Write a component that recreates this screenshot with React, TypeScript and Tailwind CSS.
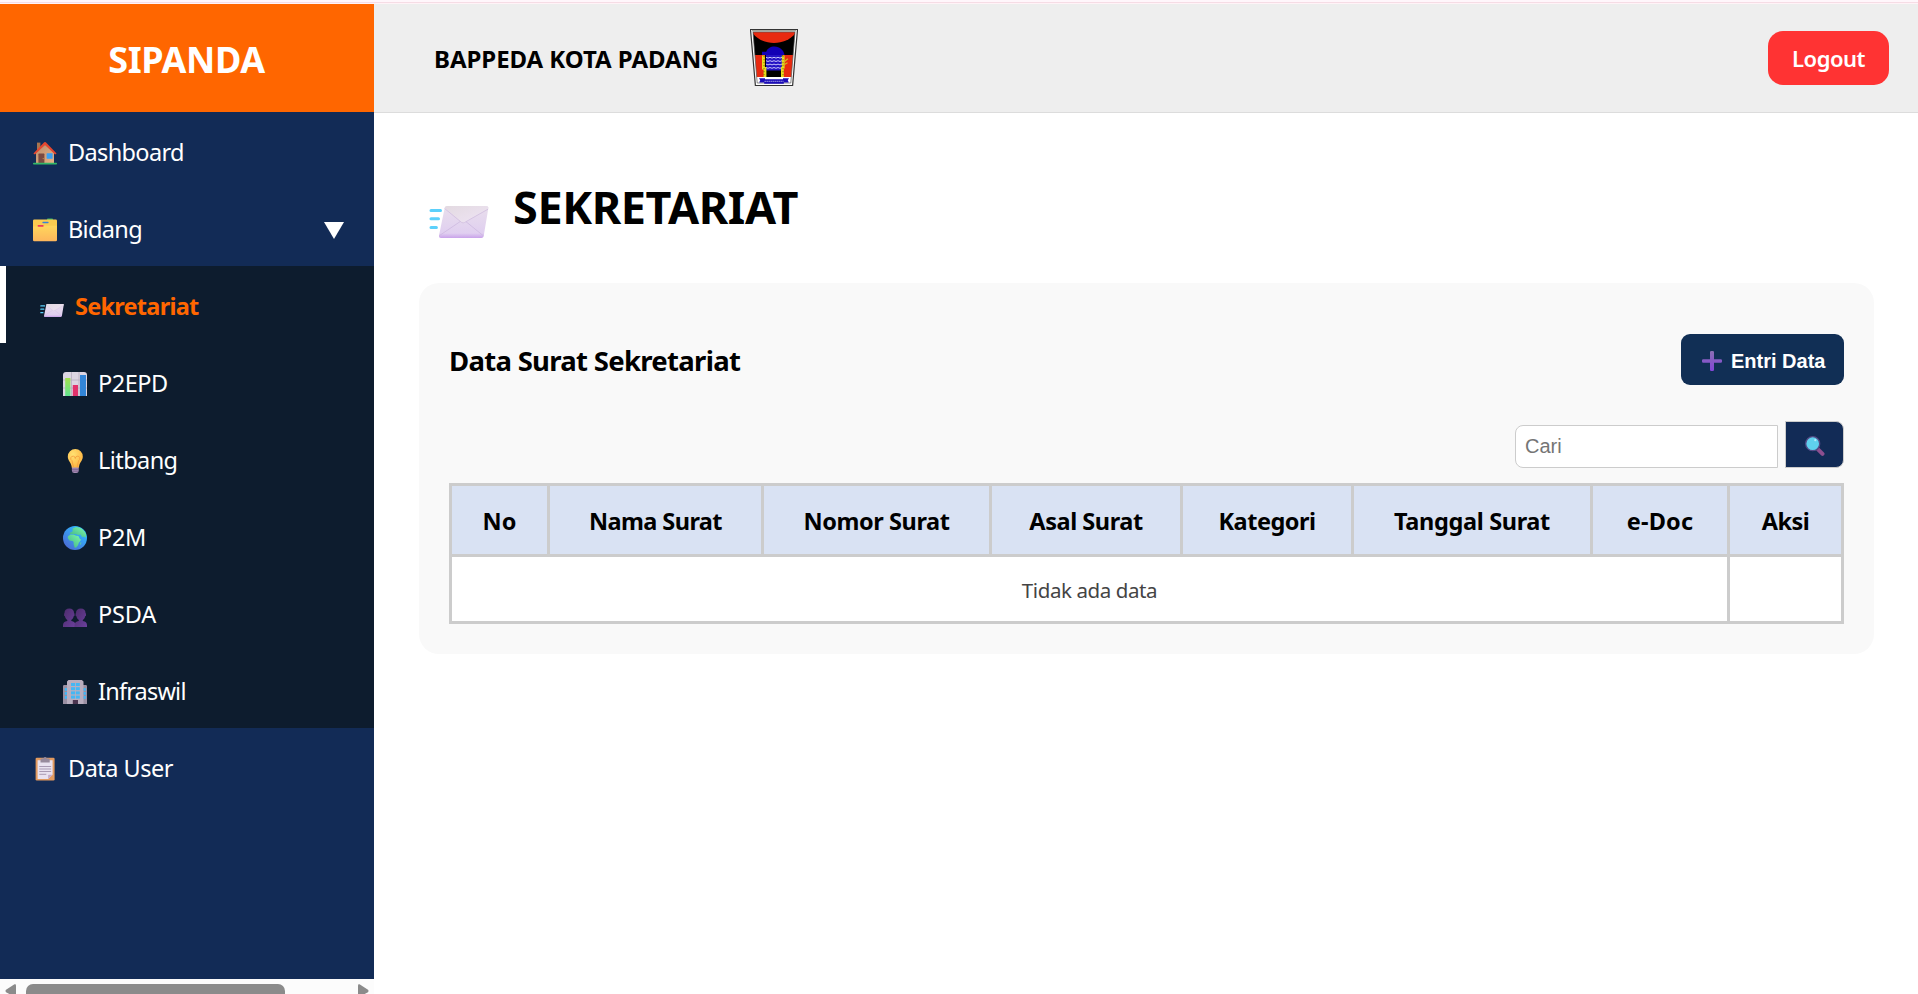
import type { ReactNode } from "react";

const HouseIcon = () => (
  <svg viewBox="0 0 24 24" className="size-6 shrink-0">
    <defs>
      <linearGradient id="wall" x1="0" y1="0" x2="1" y2="1">
        <stop offset="0" stopColor="#b98d6c" />
        <stop offset="1" stopColor="#e8b184" />
      </linearGradient>
    </defs>
    <rect x="4" y="1.6" width="3.4" height="8" fill="#a8744f" />
    <path d="M3 11.5 12 3.5l9 8V22H3z" fill="url(#wall)" />
    <path d="M.4 12.4 11.2 1.3a1.2 1.2 0 0 1 1.6 0L23.6 12.4l-1.5 1.2L12 3.9 1.9 13.6z" fill="#e5472f" />
    <rect x="5.4" y="12.6" width="6" height="9.4" rx=".6" fill="#7a4a42" />
    <rect x="9.6" y="17" width="1.2" height="1.2" rx=".6" fill="#c9a04f" />
    <rect x="13.6" y="12.2" width="6" height="5.6" rx=".5" fill="#3aa0f2" />
    <rect y="21.8" width="24" height="1.8" rx=".8" fill="#32b768" />
  </svg>
);

const FolderIcon = () => (
  <svg viewBox="0 0 24 24" className="size-6 shrink-0">
    <defs>
      <linearGradient id="folder" x1="0" y1="0" x2="0" y2="1">
        <stop offset="0" stopColor="#ffd65c" />
        <stop offset="1" stopColor="#fdb65c" />
      </linearGradient>
    </defs>
    <rect x="14" y=".4" width="6" height="3" rx=".8" fill="#32b768" />
    <path d="M0 2.800a1.200 1.200 0 0 1 1.200-1.200h21.600A1.200 1.200 0 0 1 24 2.800V12H0z" fill="#fbcb50" />
    <rect x="9.400" y="3.700" width="6.200" height="1.500" rx=".6" fill="#3b82d6" />
    <path d="M0 8.600h10.600l1.200-.9H24V22a1.300 1.300 0 0 1-1.300 1.300H1.300A1.300 1.300 0 0 1 0 22z" fill="url(#folder)" />
    <rect x="4.600" y="7" width="6" height="1.800" rx=".7" fill="#f03c5a" />
  </svg>
);

const EnvelopeIcon = ({ className }: { className: string }) => (
  <svg viewBox="0 0 60 32" className={className}>
    <defs>
      <linearGradient id="mail" x1="0" y1="0" x2="0" y2="1">
        <stop offset="0" stopColor="#e9dfec" />
        <stop offset=".85" stopColor="#e0cff0" />
        <stop offset="1" stopColor="#c9a2ea" />
      </linearGradient>
      <linearGradient id="flap" x1="0" y1="0" x2="1" y2="1">
        <stop offset="0" stopColor="#e3dae1" />
        <stop offset="1" stopColor="#efe4f5" />
      </linearGradient>
    </defs>
    <g stroke="#5cd0fb" strokeWidth="3" strokeLinecap="round">
      <path d="M2 4.600h9.500M2 12.800h7.500M2 21.400h5.400" />
    </g>
    <path d="M15.600 2.200A3 3 0 0 1 18.400 0H57.300a2 2 0 0 1 2 2.500L54.700 30a2.400 2.400 0 0 1-2.400 2H12a2 2 0 0 1-2-2.400z" fill="url(#mail)" />
    <path d="M15.600 1.500A3 3 0 0 1 18.400 0H57.300a2 2 0 0 1 2 2.500L35.500 16.500q-1.500.8-2.800 0z" fill="url(#flap)" />
    <path d="M15.600 2.500 32.700 16.500q1.500.8 2.800 0L59 3.200" fill="none" stroke="#d3c1e0" strokeWidth=".9" />
    <path d="M10.500 29.500 31 15.700M54.400 29.800 37 15.700" fill="none" stroke="#cdb9e0" strokeWidth=".8" />
  </svg>
);

const ChartIcon = () => (
  <svg viewBox="0 0 24 24" className="size-6 shrink-0">
    <defs>
      <linearGradient id="green" x1="0" y1="0" x2="0" y2="1">
        <stop offset="0" stopColor="#a4e04e" />
        <stop offset="1" stopColor="#5fe38e" />
      </linearGradient>
    </defs>
    <path d="M0 3a3 3 0 0 1 3-3h18a3 3 0 0 1 3 3v21H0z" fill="#dcd5e2" />
    <path d="M8.500 0v24M16 0v24M0 8h24M0 16h24" stroke="#b7adbf" strokeWidth=".8" />
    <rect x="2.200" y="6" width="5.200" height="18" fill="url(#green)" />
    <rect x="9.800" y="13" width="5.200" height="11" fill="#e2326c" />
    <rect x="17" y="3" width="6" height="21" fill="#3285d8" />
  </svg>
);

const BulbIcon = () => (
  <svg viewBox="0 0 24 24" className="size-6 shrink-0">
    <defs>
      <radialGradient id="bulb" cx=".35" cy=".3" r=".8">
        <stop offset="0" stopColor="#ffe173" />
        <stop offset="1" stopColor="#fdb03c" />
      </radialGradient>
    </defs>
    <path d="M12.300 0a7.500 7.500 0 0 1 7.500 7.600c0 4-2.800 5.400-3.700 9.400l-.4 1.900H8.900L8.500 17C7.600 13 4.800 11.600 4.800 7.600A7.500 7.500 0 0 1 12.300 0z" fill="url(#bulb)" />
    <path d="m10.500 18-1.600-6.500a2.300 2.300 0 1 1 3.400-2 2.300 2.300 0 1 1 3.400 2L14.100 18" fill="none" stroke="#f39a3c" strokeWidth=".8" />
    <path d="M8.900 18.500h6.800v3.200a2.400 2.400 0 0 1-2.400 2.300h-2a2.400 2.400 0 0 1-2.400-2.300z" fill="#a48bb4" />
    <path d="M8.900 20.300h6.800M9.200 22.200h6.200" stroke="#6f5483" strokeWidth=".7" />
  </svg>
);

const GlobeIcon = () => (
  <svg viewBox="0 0 24 24" className="size-6 shrink-0">
    <defs>
      <linearGradient id="sea" x1=".8" y1=".2" x2=".2" y2=".9">
        <stop offset="0" stopColor="#2fb6ff" />
        <stop offset="1" stopColor="#4a6fd6" />
      </linearGradient>
      <linearGradient id="land" x1="1" y1="0" x2="0" y2="1">
        <stop offset="0" stopColor="#7dfba9" />
        <stop offset="1" stopColor="#3fae86" />
      </linearGradient>
    </defs>
    <circle cx="12" cy="12" r="12" fill="url(#sea)" />
    <path d="M9.500 2.600 13 1l4 .8c3 1.400 5.200 4 6.200 7l-.6 3-2-1.300-1.200.8-2-2.700-2.400.3-2.200-1-2.500.6-2-.8-1.400.7.300-2 2-.7.600-1.600z" fill="url(#land)" />
    <path d="M5 10.200 7.600 8.400l3.400.3 2.200 1 2.200.3 1.500 3 1.300.8-2.400 3-.8 2.400-1.900 2.300-1.400.2-1-3.100-.1-2.500-1-1.200-3.200-.4L4.700 12z" fill="url(#land)" />
    <path d="m17.500 16.300.9 0-.4 2.200-.9.300z" fill="#5fd19a" />
  </svg>
);

const PeopleIcon = () => (
  <svg viewBox="0 0 24 24" className="size-6 shrink-0">
    <defs>
      <linearGradient id="person" x1="0" y1="0" x2="1" y2="1">
        <stop offset="0" stopColor="#4c2b6b" />
        <stop offset="1" stopColor="#6a409c" />
      </linearGradient>
    </defs>
    {[0, 11.5].map((x) => (
      <g key={x} transform={`translate(${x} 5.500)`} fill="url(#person)">
        <path d="M1.500 4.500C1.500 1.500 3.300 0 6.300 0S11 1.500 11 4.500l.5.800v1.900l-.8.600C10.200 10.500 8.600 12 6.300 12s-3.900-1.500-4.400-4.200l-.8-.600V5.300zM4.300 10h4v4h-4zM0 18.500v-1.800c0-2.500 1.700-3.700 4.200-4.200h4.200c2.500.5 4.100 1.700 4.100 4.200v1.800z" />
      </g>
    ))}
  </svg>
);

const BuildingIcon = () => (
  <svg viewBox="0 0 24 24" className="size-6 shrink-0">
    <path d="M0 6.200A1.200 1.200 0 0 1 1.200 5H5v19H0z" fill="#9a90a3" />
    <path d="M24 6.200A1.200 1.200 0 0 0 22.800 5H19v19h5z" fill="#9a90a3" />
    <path d="M4 1.500 5.500 0h13.300L20.500 1.500V24H4z" fill="#b9aebf" />
    <g fill="#44b7f5">
      {[3, 7.2, 11.4, 15.6].map((y) => (
        <g key={y}>
          <rect x="8" y={y} width="4" height="3" />
          <rect x="12.800" y={y} width="4" height="3" />
        </g>
      ))}
      {[8, 12, 16].map((y) => (
        <g key={y}>
          <rect x="1.800" y={y} width="2.200" height="2.800" />
          <rect x="20.600" y={y} width="2.200" height="2.800" />
        </g>
      ))}
    </g>
    <rect x="9.800" y="20" width="5.200" height="4" fill="#4b3550" />
  </svg>
);

const ClipboardIcon = () => (
  <svg viewBox="0 0 24 24" className="size-6 shrink-0">
    <rect x="2.600" y=".8" width="19" height="22.600" rx="1.200" fill="#e29a5f" />
    <path d="M4.600 3.200h15v14.500l-4.500 4.300H4.600z" fill="#e9e2f0" />
    <path d="m19.600 17.700-4.500 4.300v-3.600q0-.7.700-.7z" fill="#c4abc9" />
    <path d="M7.500 5.400V2.600a1 1 0 0 1 1-1h2a1.600 1.600 0 0 1 3.200 0h2a1 1 0 0 1 1 1v2.800z" fill="#978a9c" />
    <path d="M6.300 9.500h11.800M6.300 12h11.800M6.300 14.500h11.800M6.300 17.300h7" stroke="#a99ab3" strokeWidth="1" />
  </svg>
);

const CityCrest = () => (
  <svg viewBox="0 0 48 57" className="h-[57px] w-12 shrink-0">
    <defs>
      <clipPath id="field">
        <path d="M3 3h42l-4.200 51H7.200z" />
      </clipPath>
    </defs>
    <path d="M.500.500h47L42.600 56.500H5.400z" fill="#fff" stroke="#333" strokeWidth="1.200" />
    <path d="M2 1.800h44" stroke="#a3a399" strokeWidth="1.600" />
    <g clipPath="url(#field)">
      <rect width="48" height="26" fill="#000" />
      <path d="M2 3h44C42 10 33 14 24 14S6 10 2 3z" fill="#e82a10" />
      <rect y="26" width="48" height="22" fill="#e82a10" />
      <rect y="48" width="48" height="8" fill="#fff" />
    </g>
    <path d="M3 3h42l-4.200 51H7.200z" fill="none" stroke="#555" strokeWidth=".7" />
    <path d="M12 26v-3.200h4.200c1-3.400 4.300-5.400 8.300-5.400 5.300 0 9.300 3.500 10 8.600z" fill="#1200b5" />
    <rect x="15" y="26" width="18" height="22" fill="#000" />
    <rect x="16" y="26" width="16" height="15.500" fill="#2413c4" />
    <path d="M16 28.300l2 .8 2-.8 2 .8 2-.8 2 .8 2-.8 2 .8 2-.8M16 31.700l2 .8 2-.8 2 .8 2-.8 2 .8 2-.8 2 .8 2-.8M16 35.100l2 .8 2-.8 2 .8 2-.8 2 .8 2-.8 2 .8 2-.8M16 38.500l2 .8 2-.8 2 .8 2-.8 2 .8 2-.8 2 .8 2-.8" fill="none" stroke="#d9d8ff" strokeWidth=".9" />
    <path d="M13.400 26.500v14M15 38v10M33.200 26.500v13M32.400 38v10" stroke="#e8dc1c" strokeWidth="2.800" />
    <path d="M14 27v20M33 27v20" stroke="#6b6310" strokeWidth=".8" strokeDasharray="1.200 1.800" />
    <path d="M34 33l3.800-3.200M33.500 36l4-2.200" stroke="#d5b81a" strokeWidth="1.200" />
    <path d="M9 49.300h6v1h18v-1h6l-1.200 2 1 2.200h-5v1.200H14.200v-1.200h-5l1-2.200z" fill="#1a0bb8" />
    <path d="M14.500 52.300h19" stroke="#a9a6e6" strokeWidth="1" strokeDasharray="1.400 .6" />
  </svg>
);

const PlusIcon = () => (
  <svg viewBox="0 0 20 20" className="size-5 shrink-0">
    <defs>
      <linearGradient id="plus" x1="0" y1="0" x2="0" y2="1">
        <stop offset="0" stopColor="#8b6fb4" />
        <stop offset="1" stopColor="#8245d8" />
      </linearGradient>
    </defs>
    <path d="M8 1.200A1.200 1.200 0 0 1 9.200 0h1.600A1.200 1.200 0 0 1 12 1.200V8.200h6.800A1.200 1.200 0 0 1 20 9.400v1.200a1.200 1.200 0 0 1-1.200 1.200H12v7A1.200 1.200 0 0 1 10.800 20H9.200A1.200 1.200 0 0 1 8 18.800v-7H1.200A1.200 1.200 0 0 1 0 10.600V9.400a1.200 1.200 0 0 1 1.200-1.200H8z" fill="url(#plus)" />
  </svg>
);

const SearchIcon = () => (
  <svg viewBox="0 0 20 20" className="size-5 shrink-0">
    <path d="M13 13.300 17.500 17.800" stroke="#8d4f8f" strokeWidth="4" strokeLinecap="round" />
    <path d="M11.500 12 13 13.500" stroke="#5c4480" strokeWidth="2.600" />
    <circle cx="7.700" cy="7.700" r="7" fill="#5fd0ee" stroke="#544a86" strokeWidth="1.300" />
    <circle cx="10.300" cy="4.200" r="1.100" fill="#b5ecfb" />
  </svg>
);

type NavItem = { label: string; tracking: string; icon: ReactNode };

const bidangItems: NavItem[] = [
  { label: "P2EPD", tracking: "tracking-[-0.5px]", icon: <ChartIcon /> },
  { label: "Litbang", tracking: "tracking-[-0.57px]", icon: <BulbIcon /> },
  { label: "P2M", tracking: "tracking-[-0.3px]", icon: <GlobeIcon /> },
  { label: "PSDA", tracking: "tracking-[-0.2px]", icon: <PeopleIcon /> },
  { label: "Infraswil", tracking: "tracking-[-0.8px]", icon: <BuildingIcon /> },
];

const columns = [
  { label: "No", width: "w-[98px]", tracking: "tracking-normal" },
  { label: "Nama Surat", width: "w-[214px]", tracking: "tracking-[-0.6px]" },
  { label: "Nomor Surat", width: "w-[228px]", tracking: "tracking-[-0.4px]" },
  { label: "Asal Surat", width: "w-[191px]", tracking: "tracking-[-0.45px]" },
  { label: "Kategori", width: "w-[171px]", tracking: "tracking-[-0.5px]" },
  { label: "Tanggal Surat", width: "w-[239px]", tracking: "tracking-[-0.35px]" },
  { label: "e-Doc", width: "w-[137px]", tracking: "tracking-[0.2px]" },
  { label: "Aksi", width: "w-[111px]", tracking: "tracking-[-0.5px]" },
];

function Sidebar() {
  return (
    <aside className="flex w-[374px] shrink-0 flex-col bg-[#122b56] text-[23.5px] text-white">
      <div className="flex h-[108px] shrink-0 items-center justify-center bg-[#ff6600] pt-[3px] pr-px text-[36px] font-bold tracking-[-0.4px]">
        SIPANDA
      </div>
      <nav className="flex grow flex-col">
        <a className="flex h-[77px] items-center pt-[5px] pl-[33px]">
          <HouseIcon />
          <span className="ml-[11px] tracking-[-0.65px]">Dashboard</span>
        </a>
        <a className="flex h-[77px] items-center pt-[5px] pr-[30px] pl-[33px]">
          <FolderIcon />
          <span className="ml-[11px] tracking-[-0.65px]">Bidang</span>
          <svg viewBox="0 0 20 17" className="ml-auto h-[17px] w-5">
            <path d="M0 0h20L10 17z" fill="#fff" />
          </svg>
        </a>
        <div className="bg-[#0d1c2e]">
          <a className="flex h-[77px] items-center border-l-[6px] border-white pt-[5px] pl-[34px] font-bold text-[#ff6600]">
            <EnvelopeIcon className="mt-[6px] h-[13px] w-6 shrink-0" />
            <span className="ml-[11px] tracking-[-0.75px]">Sekretariat</span>
          </a>
          {bidangItems.map((item) => (
            <a key={item.label} className="flex h-[77px] items-center pt-[5px] pl-[63px]">
              {item.icon}
              <span className={`ml-[11px] ${item.tracking}`}>{item.label}</span>
            </a>
          ))}
        </div>
        <a className="flex h-[77px] items-center pt-[5px] pl-[33px]">
          <ClipboardIcon />
          <span className="ml-[11px] tracking-[-0.5px]">Data User</span>
        </a>
      </nav>
      <div className="flex h-[15px] shrink-0 items-start overflow-hidden bg-[#fcfcfc] pt-[5px] pr-[5px] pl-[5px]">
        <svg viewBox="0 0 12 14" className="h-[14px] w-3 shrink-0">
          <path d="M11 1.500v11q0 1-1 .6L1 8.200Q0 7 1 5.800L9.500.3q1.500-.6 1.500 1.200z" fill="#8b8b8b" />
        </svg>
        <div className="ml-[9px] h-4 w-[259px] shrink-0 rounded-[7px] bg-[#8b8b8b]" />
        <svg viewBox="0 0 12 14" className="ml-auto h-[14px] w-3 shrink-0">
          <path d="M1 1.500v11q0 1 1 .6l9-4.900q1-1.200 0-2.400L2.500.3Q1-.3 1 1.500z" fill="#8b8b8b" />
        </svg>
      </div>
    </aside>
  );
}

function TopBar() {
  return (
    <header className="flex h-[109px] items-center border-b border-[#dcdcdc] bg-[#eeeeee] pr-[29px] pl-[60px]">
      <span className="pt-[2px] text-[24px] font-bold tracking-[-0.05px]">BAPPEDA KOTA PADANG</span>
      <div className="-mt-px ml-8">
        <CityCrest />
      </div>
      <button className="ml-auto flex h-[54px] w-[121px] items-center justify-center rounded-[15px] bg-[#ff3333] pt-px text-[22px] font-semibold tracking-[-0.5px] text-white">
        Logout
      </button>
    </header>
  );
}

function LetterTable() {
  return (
    <div className="mt-[15px] border-[3px] border-[#cccccc] bg-white">
      <div className="flex h-[71px] border-b-[3px] border-[#cccccc] bg-[#d9e2f3]">
        {columns.map((col) => (
          <div
            key={col.label}
            className={`flex shrink-0 items-center justify-center border-r-[3px] border-[#cccccc] pt-1 text-[23.5px] font-bold whitespace-nowrap last:border-r-0 ${col.width} ${col.tracking}`}
          >
            {col.label}
          </div>
        ))}
      </div>
      <div className="flex h-16">
        <div className="flex w-[1278px] items-center justify-center border-r-[3px] border-[#cccccc] pt-[3px] text-[20.5px] tracking-[-0.4px] text-[#444444]">
          Tidak ada data
        </div>
        <div className="grow" />
      </div>
    </div>
  );
}

export default function App() {
  return (
    <div className="flex h-[994px] w-[1918px] flex-col overflow-hidden bg-white font-['Noto_Sans','Open_Sans',sans-serif] leading-normal text-black">
      <div className="h-1 shrink-0 border-b border-[#fff3f7] bg-[#fff6fb] pt-[2px]">
        <div className="h-px bg-[#f6dce5]" />
      </div>
      <div className="flex min-h-0 grow">
        <Sidebar />
        <div className="flex min-w-0 grow flex-col">
          <TopBar />
          <main className="pr-11 pl-[45px]">
            <div className="flex h-[170px] items-center pt-[17px] pl-[10px]">
              <EnvelopeIcon className="mt-[31px] h-8 w-[60px] shrink-0" />
              <h1 className="ml-6 text-[45px] leading-none font-bold tracking-[-0.4px]">SEKRETARIAT</h1>
            </div>
            <section className="rounded-[20px] bg-[#f9f9f9] px-[30px] pt-[51px] pb-[30px]">
              <div className="flex h-[51px] items-center justify-between">
                <h2 className="pt-[3px] text-[27.5px] font-bold tracking-[-0.7px]">Data Surat Sekretariat</h2>
                <button className="flex h-[51px] w-[163px] items-center rounded-[9px] bg-[#112f55] pt-[3px] pl-[21px] font-['Liberation_Sans',Arial,sans-serif] text-[20px] font-bold whitespace-nowrap text-white">
                  <PlusIcon />
                  <span className="ml-[9px]">Entri Data</span>
                </button>
              </div>
              <div className="mt-9 flex items-end justify-end">
                <input
                  placeholder="Cari"
                  className="h-[43px] w-[263px] rounded-l-[8px] border border-[#cccccc] bg-white px-[9px] font-['Liberation_Sans',Arial,sans-serif] text-[20px] placeholder:text-[#757575]"
                />
                <button className="ml-[7px] flex h-[47px] w-[59px] items-center justify-center rounded-r-[8px] border border-[#cccccc] bg-[#122b56] pt-[2px]">
                  <SearchIcon />
                </button>
              </div>
              <LetterTable />
            </section>
          </main>
        </div>
      </div>
    </div>
  );
}
